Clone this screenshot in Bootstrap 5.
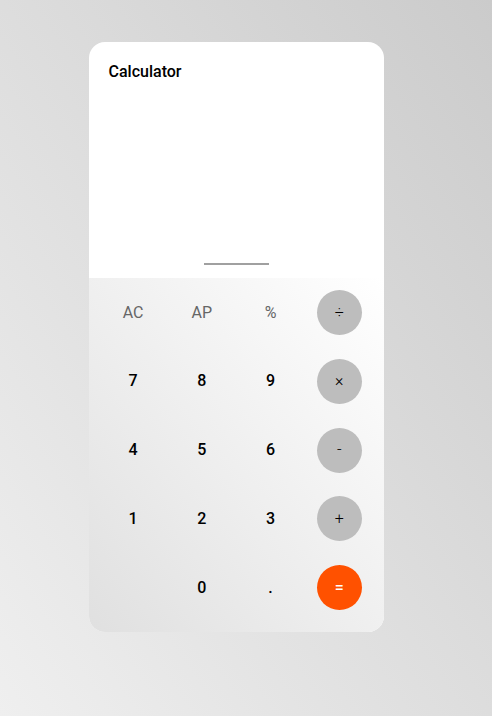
<!DOCTYPE html>
<html lang="en">
<head>
<meta charset="utf-8">
<meta name="viewport" content="width=device-width, initial-scale=1">
<title>Calculator</title>
<link href="https://cdn.jsdelivr.net/npm/bootstrap@5.3.0/dist/css/bootstrap.min.css" rel="stylesheet">
<style>
  body {
    font-family: Roboto, "Liberation Sans", sans-serif;
    font-size: 16px;
    color: #000;
    background: linear-gradient(to top right, #efefef, #cbcbcb) no-repeat;
  }
  .calculator {
    width: 60%;
    min-width: 260px;
    margin: 42px 22% 42px 18%;
    border-radius: 16px;
  }
  .screen {
    min-height: 236px;
    padding: 18px 20px 13px;
  }
  .screen-title { font-size: 16px; line-height: 24px; }
  .screen-handle { width: 65px; height: 2px; background: #a0a0a0; }
  .keypad {
    min-height: 354px;
    padding: 12px 22px 22px;
    background: linear-gradient(to top right, #e0e0e0, #fff);
  }
  .key {
    width: 45px;
    height: 45px;
    color: #000;
    font-weight: 500;
    line-height: 24px;
  }
  .key-fn { color: #666; font-weight: 400; }
  .key-op { background: #bdbdbd; color: #000; font-weight: 300; }
  .key-equals { background: #ff5100; color: #fff; font-weight: 500; }
</style>
</head>
<body class="min-vh-100 d-flex align-items-start">
<main class="calculator d-flex flex-column overflow-hidden bg-white">
  <section class="screen d-flex flex-column">
    <h1 class="screen-title fw-medium m-0">Calculator</h1>
    <output class="flex-grow-1 text-end" aria-label="Result"></output>
    <div class="screen-handle align-self-center"></div>
  </section>
  <section class="keypad d-flex flex-column justify-content-between" aria-label="Keypad">
    <div class="d-flex justify-content-between">
      <button type="button" class="key key-fn btn p-0 border-0 rounded-circle">AC</button>
      <button type="button" class="key key-fn btn p-0 border-0 rounded-circle">AP</button>
      <button type="button" class="key key-fn btn p-0 border-0 rounded-circle">%</button>
      <button type="button" class="key key-op btn p-0 border-0 rounded-circle">÷</button>
    </div>
    <div class="d-flex justify-content-between">
      <button type="button" class="key btn p-0 border-0 rounded-circle">7</button>
      <button type="button" class="key btn p-0 border-0 rounded-circle">8</button>
      <button type="button" class="key btn p-0 border-0 rounded-circle">9</button>
      <button type="button" class="key key-op btn p-0 border-0 rounded-circle">×</button>
    </div>
    <div class="d-flex justify-content-between">
      <button type="button" class="key btn p-0 border-0 rounded-circle">4</button>
      <button type="button" class="key btn p-0 border-0 rounded-circle">5</button>
      <button type="button" class="key btn p-0 border-0 rounded-circle">6</button>
      <button type="button" class="key key-op btn p-0 border-0 rounded-circle">-</button>
    </div>
    <div class="d-flex justify-content-between">
      <button type="button" class="key btn p-0 border-0 rounded-circle">1</button>
      <button type="button" class="key btn p-0 border-0 rounded-circle">2</button>
      <button type="button" class="key btn p-0 border-0 rounded-circle">3</button>
      <button type="button" class="key key-op btn p-0 border-0 rounded-circle">+</button>
    </div>
    <div class="d-flex justify-content-between">
      <span class="key"></span>
      <button type="button" class="key btn p-0 border-0 rounded-circle">0</button>
      <button type="button" class="key btn p-0 border-0 rounded-circle">.</button>
      <button type="button" class="key key-equals btn p-0 border-0 rounded-circle">=</button>
    </div>
  </section>
</main>
<script src="https://cdn.jsdelivr.net/npm/bootstrap@5.3.0/dist/js/bootstrap.bundle.min.js"></script>
</body>
</html>
